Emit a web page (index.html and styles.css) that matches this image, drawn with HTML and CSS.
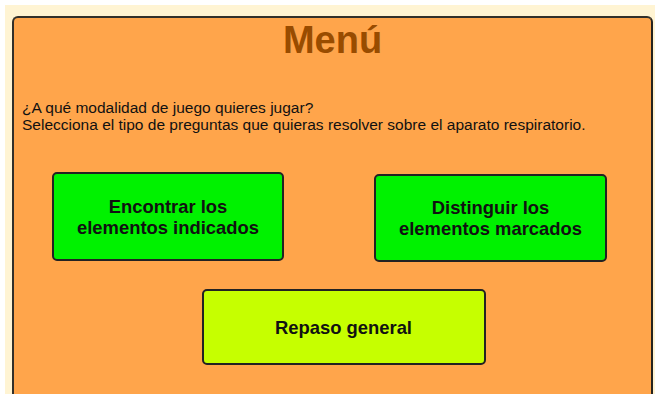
FILE: index.html
```html
<!DOCTYPE html>
<html>
<head>
  <meta charset="UTF-8">
  <title>Menú</title>
  <link rel="stylesheet" href="styles.css">
</head>
<body>
  <div class="frame">
    <div class="panel">
      <h1>Menú</h1>
      <p class="intro">
        ¿A qué modalidad de juego quieres jugar?<br>
        Selecciona el tipo de preguntas que quieras resolver sobre el aparato respiratorio.
      </p>
      <div class="row">
        <button class="option green">Encontrar los<br>elementos indicados</button>
        <button class="option green second">Distinguir los<br>elementos marcados</button>
      </div>
      <div class="row-bottom">
        <button class="option lime">Repaso general</button>
      </div>
    </div>
  </div>
</body>
</html>
```

FILE: styles.css
```css
html, body {
  height: 100%;
}

body {
  margin: 0;
  background-color: #fff;
  font-family: "Liberation Sans", Arial, sans-serif;
  overflow: hidden;
}

.frame {
  margin: 5px 0 0 5px;
  padding: 11px 2px 0 7px;
  background-color: #fff4d3;
  height: 100%;
}

.panel {
  background-color: #ffa54b;
  border: 2px solid #33302a;
  border-right-color: #25231f;
  border-radius: 6px;
  min-height: 420px;
  box-sizing: border-box;
  padding-top: 1px;
}

h1 {
  margin: 0;
  text-align: center;
  font-size: 38px;
  line-height: 42px;
  color: #994c00;
}

.intro {
  margin: 38px 0 0 8px;
  font-size: 15.5px;
  line-height: 17px;
  color: #111;
}

.row {
  display: flex;
  justify-content: space-between;
  padding: 0 44px 0 38px;
  margin-top: 39px;
  align-items: flex-start;
}

.option {
  border: 2px solid #222;
  border-radius: 5px;
  font-family: "Liberation Sans", Arial, sans-serif;
  font-weight: bold;
  font-size: 18.4px;
  line-height: 21px;
  color: #111;
  cursor: pointer;
  padding: 0;
}

.green {
  background-color: #00f200;
  width: 232px;
  height: 89px;
}

.second {
  margin-top: 2px;
  width: 233px;
  height: 88px;
}

.row-bottom {
  display: flex;
  justify-content: center;
  padding-left: 22px;
  margin-top: 27px;
}

.lime {
  background-color: #c6ff00;
  width: 284px;
  height: 76px;
}
```
